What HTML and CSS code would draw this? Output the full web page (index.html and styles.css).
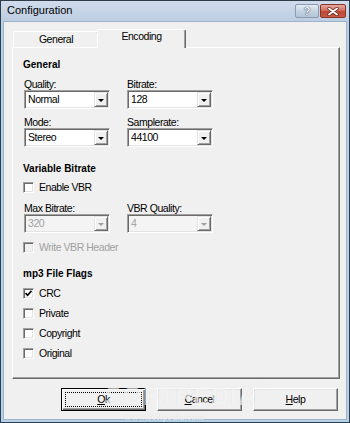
FILE: index.html
```html
<!DOCTYPE html>
<html>
<head>
<meta charset="utf-8">
<title>Configuration</title>
<link rel="stylesheet" href="styles.css">
</head>
<body>
<div class="window">
  <div class="titlebar">
    <span class="title">Configuration</span>
    <div class="caption-btns">
      <span class="cbtn help">?</span>
      <span class="cbtn close">
        <svg width="12" height="9" viewBox="0 0 12 9"><path d="M2 1.5 L10 7.5 M10 1.5 L2 7.5" stroke="#5a1e16" stroke-width="3.2" stroke-linecap="round"/><path d="M2 1.5 L10 7.5 M10 1.5 L2 7.5" stroke="#fff" stroke-width="1.8" stroke-linecap="round"/></svg>
      </span>
    </div>
  </div>
  <div class="client">
    <div class="tabs">
      <div class="tab">General</div>
      <div class="tab active">Encoding</div>
    </div>
    <div class="panel">
      <div class="group-title">General</div>
      <div class="grid">
        <div class="field">
          <label class="lbl">Quality:</label>
          <div class="combo"><span class="val">Normal</span><span class="drop"><span class="arrow"></span></span></div>
        </div>
        <div class="field">
          <label class="lbl">Bitrate:</label>
          <div class="combo"><span class="val">128</span><span class="drop"><span class="arrow"></span></span></div>
        </div>
        <div class="field">
          <label class="lbl">Mode:</label>
          <div class="combo"><span class="val">Stereo</span><span class="drop"><span class="arrow"></span></span></div>
        </div>
        <div class="field">
          <label class="lbl">Samplerate:</label>
          <div class="combo"><span class="val">44100</span><span class="drop"><span class="arrow"></span></span></div>
        </div>
      </div>

      <div class="group-title vbr">Variable Bitrate</div>
      <div class="check-row first"><span class="box"></span><span>Enable VBR</span></div>
      <div class="grid single">
        <div class="field">
          <label class="lbl">Max Bitrate:</label>
          <div class="combo disabled"><span class="val">320</span><span class="drop"><span class="arrow"></span></span></div>
        </div>
        <div class="field">
          <label class="lbl">VBR Quality:</label>
          <div class="combo disabled"><span class="val">4</span><span class="drop"><span class="arrow"></span></span></div>
        </div>
      </div>
      <div class="check-row after-combo disabled"><span class="box"></span><span>Write VBR Header</span></div>

      <div class="group-title flags">mp3 File Flags</div>
      <div class="check-row first-flag"><span class="box"><svg width="7" height="7" viewBox="0 0 7 7"><path d="M0.5 3 L2.6 5.3 L6.5 0.8" fill="none" stroke="#000" stroke-width="1.6"/></svg></span><span>CRC</span></div>
      <div class="check-row"><span class="box"></span><span>Private</span></div>
      <div class="check-row"><span class="box"></span><span>Copyright</span></div>
      <div class="check-row"><span class="box"></span><span>Original</span></div>
    </div>
    <div class="buttons">
      <div class="btn default"><div class="focus"><span><u>O</u>k</span></div></div>
      <div class="btn"><span><u>C</u>ancel</span></div>
      <div class="btn"><span><u>H</u>elp</span></div>
    </div>
  </div>
  <div class="watermark">SOFTPEDIA<sup>™</sup></div>
  <div class="watermark-url">www.softpedia.com</div>
</div>
</body>
</html>
```
FILE: styles.css
```css
* { box-sizing: border-box; }
html, body { margin: 0; padding: 0; }
body {
  width: 350px;
  height: 423px;
  overflow: hidden;
  background: #f0f0f0;
  font-family: "Liberation Sans", Arial, sans-serif;
  font-size: 10.5px;
  letter-spacing: -0.45px;
  color: #000;
}
.window {
  position: relative;
  width: 350px;
  height: 423px;
  border: 1px solid #2f3d4a;
  background: #b4d3ea;
  display: flex;
  flex-direction: column;
}
.titlebar {
  height: 20px;
  flex: none;
  display: flex;
  align-items: flex-start;
  background: linear-gradient(#d0dcec, #bdcde2);
}
.title {
  font-size: 11px;
  letter-spacing: 0;
  line-height: 13px;
  margin: 3px 0 0 6px;
}
.caption-btns {
  margin: 3px 3px 0 auto;
  display: flex;
  gap: 1px;
}
.cbtn {
  height: 14px;
  border-radius: 2px;
  display: flex;
  align-items: center;
  justify-content: center;
}
.cbtn.help {
  width: 24px;
  border: 1px solid #8a9bb0;
  background: linear-gradient(#e6edf5, #c5d3e3 50%, #b4c5d9);
  font-weight: bold;
  font-size: 11px;
  letter-spacing: 0;
  color: #f6f8fb;
  text-shadow: 0 0 1px #2e4058, 0 0 1px #2e4058;
}
.cbtn.close {
  width: 26px;
  border: 1px solid #8b3529;
  background: linear-gradient(#e7aa9e, #d0705f 45%, #bf4633 55%, #c95a45);
}
.client {
  flex: 1;
  margin: 0 2px 2px 2px;
  border: 1px solid #9fb3c8;
  background: #f0f0f0;
  display: flex;
  flex-direction: column;
}
.tabs {
  height: 25px;
  flex: none;
  display: flex;
  align-items: flex-end;
  padding-left: 9px;
}
.tab {
  width: 86px;
  height: 16px;
  border-top: 1px solid #fff;
  border-left: 1px solid #fff;
  border-right: 1px solid #696969;
  box-shadow: inset -1px 0 #a0a0a0;
  border-radius: 2px 2px 0 0;
  text-align: center;
  line-height: 13px;
  padding-top: 1px;
  background: #f0f0f0;
}
.tab.active {
  position: relative;
  z-index: 1;
  width: 89px;
  height: 19px;
  margin-left: -2px;
  margin-bottom: -1px;
  padding-top: 0;
}
.panel {
  margin-left: 8px;
  width: 328px;
  height: 332px;
  flex: none;
  border: 1px solid;
  border-color: #fff #696969 #696969 #fff;
  box-shadow: inset -1px -1px #a0a0a0;
  padding: 10px 10px 0 10px;
}
.group-title {
  font-weight: bold;
  font-size: 10px;
  letter-spacing: 0;
  line-height: 13px;
  height: 13px;
}
.group-title.vbr { margin-top: 15px; }
.group-title.flags { margin-top: 14px; }
.grid {
  display: grid;
  grid-template-columns: 86px 86px;
  column-gap: 17px;
  row-gap: 7px;
  margin: 7px 0 0 1px;
}
.grid.single { margin-top: 9px; }
.lbl {
  display: block;
  line-height: 12px;
  height: 12px;
}
.combo {
  width: 86px;
  height: 19px;
  display: flex;
  align-items: center;
  border: 1px solid;
  border-color: #a0a0a0 #fff #fff #a0a0a0;
  box-shadow: inset 1px 1px #696969, inset -1px -1px #e3e3e3;
  background: #fff;
  padding: 1px;
}
.combo .val {
  flex: 1;
  padding-left: 2px;
  line-height: 13px;
}
.drop {
  width: 14px;
  height: 15px;
  flex: none;
  background: #f0f0f0;
  border: 1px solid;
  border-color: #e3e3e3 #696969 #696969 #e3e3e3;
  box-shadow: inset 1px 1px #fff, inset -1px -1px #a0a0a0;
  display: flex;
  align-items: center;
  justify-content: center;
  padding-top: 1px;
}
.arrow {
  width: 0;
  height: 0;
  border-left: 3px solid transparent;
  border-right: 3px solid transparent;
  border-top: 3px solid #000;
}
.combo.disabled { background: #f4f4f4; }
.combo.disabled .val { color: #a0a0a0; }
.combo.disabled .arrow { border-top-color: #a0a0a0; }
.check-row {
  display: flex;
  align-items: center;
  gap: 5px;
  height: 11px;
  line-height: 11px;
  margin-top: 9px;
}
.check-row.first { margin-top: 7px; }
.check-row.first-flag { margin-top: 8px; }
.box {
  width: 11px;
  height: 11px;
  flex: none;
  border: 1px solid;
  border-color: #a0a0a0 #fff #fff #a0a0a0;
  box-shadow: inset 1px 1px #696969, inset -1px -1px #e3e3e3;
  background: #fff;
  display: flex;
  align-items: center;
  justify-content: center;
}
.box svg { display: block; }
.check-row.disabled { color: #a0a0a0; }
.check-row.disabled .box { background: #f0f0f0; }
.buttons {
  display: flex;
  justify-content: flex-end;
  gap: 11px;
  margin-top: 9px;
  padding-right: 8px;
}
.btn {
  width: 85px;
  height: 23px;
  display: flex;
  align-items: center;
  justify-content: center;
  line-height: 13px;
  background: #f0f0f0;
  border: 1px solid;
  border-color: #fff #696969 #696969 #fff;
  box-shadow: inset -1px -1px #a0a0a0, inset 1px 1px #e3e3e3;
}
.btn.default {
  border: 1px solid #000;
  box-shadow: inset 1px 1px #fff, inset -1px -1px #696969, inset -2px -2px #a0a0a0;
  align-items: stretch;
}
.focus {
  flex: 1;
  margin: 3px;
  border: 1px dotted #000;
  display: flex;
  align-items: center;
  justify-content: center;
}
.watermark {
  position: absolute;
  left: 104px;
  top: 381px;
  font-weight: bold;
  font-size: 25px;
  letter-spacing: 1px;
  color: rgba(255, 255, 255, 0.6);
  text-shadow: 0 0 1px rgba(150, 150, 150, 0.2);
  pointer-events: none;
}
.watermark sup { font-size: 8px; vertical-align: top; }
.watermark-url {
  position: absolute;
  left: 123px;
  top: 410px;
  font-family: "Liberation Serif", serif;
  font-size: 10px;
  letter-spacing: 0;
  color: rgba(255, 255, 255, 0.75);
  text-shadow: 0 0 1px rgba(150, 150, 150, 0.3);
}
```
